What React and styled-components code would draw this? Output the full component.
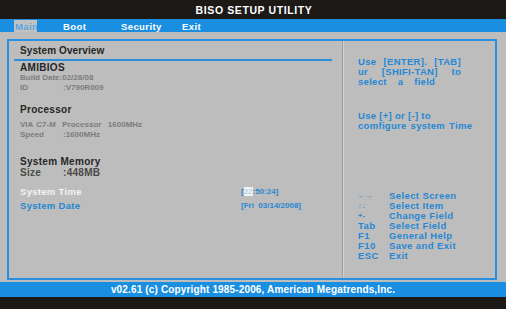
import React from "react";
import styled, { createGlobalStyle } from "styled-components";

const GlobalStyle = createGlobalStyle`
  html, body { margin: 0; padding: 0; background: #1c1917; }
  body { font-family: "Liberation Sans", Arial, sans-serif; }
`;

const Screen = styled.div`
  width: 506px;
  height: 309px;
  display: flex;
  flex-direction: column;
  font-weight: bold;
  overflow: hidden;
`;

const TitleBar = styled.div`
  height: 19px;
  background: #1c1917;
  color: #fff;
  font-size: 10.5px;
  letter-spacing: 0.6px;
  display: flex;
  align-items: center;
  justify-content: center;
  padding-left: 2px;
`;

const TabBar = styled.div`
  height: 13px;
  background: #1a8ee0;
  display: flex;
  align-items: stretch;
  padding-left: 14px;
`;

const Tab = styled.div`
  font-size: 9.5px;
  letter-spacing: 0.4px;
  line-height: 13px;
  color: ${(p) => (p.$active ? "#5aa6e0" : "#fff")};
  background: ${(p) => (p.$active ? "#c2c2c2" : "transparent")};
  padding-left: 1px;
  margin-top: 1px;
  margin-right: ${(p) => p.$gap || 0}px;
  width: ${(p) => p.$w}px;
  overflow: hidden;
  white-space: nowrap;
  box-sizing: border-box;
`;

const Main = styled.div`
  height: 250px;
  background: #bdbdbd;
  padding: 7px 9px 2px 7px;
  box-sizing: border-box;
  display: flex;
`;

const Panel = styled.div`
  flex: 1;
  border: 2px solid #2a8fdc;
  display: flex;
`;

const LeftCol = styled.div`
  width: 334px;
  border-right: 1px solid #9c9c9c;
  box-shadow: 1px 0 0 #d2d2d2;
  padding: 4px 0 0 11px;
  box-sizing: border-box;
`;

const RightCol = styled.div`
  flex: 1;
  padding: 16px 0 0 15px;
  color: #2688d4;
  font-size: 9.5px;
`;

const Heading = styled.div`
  font-size: 10px;
  letter-spacing: ${(p) => (p.$tight ? 0.1 : 0.3)}px;
  line-height: 12px;
  color: #262626;
  margin-top: ${(p) => p.$mt || 0}px;
`;

const Rule = styled.div`
  height: 2px;
  background: #2a8fdc;
  margin: 2px 10px 0 -6px;
`;

const Small = styled.div`
  font-size: 8px;
  line-height: 10px;
  color: #7c7c7c;
  display: flex;
  white-space: pre;
  word-spacing: ${(p) => p.$ws || 0}px;
  margin-top: ${(p) => p.$mt || 0}px;
`;

const Label = styled.span`
  width: ${(p) => p.$w || 43}px;
`;

const SizeRow = styled.div`
  font-size: 10px;
  line-height: 11px;
  margin-top: -1px;
  color: #4a4a4a;
  display: flex;
  letter-spacing: 0.3px;
`;

const Setting = styled.div`
  display: flex;
  align-items: center;
  height: 14px;
  margin-top: ${(p) => p.$mt || 0}px;
`;

const SettingName = styled.span`
  width: 221px;
  font-size: 9.5px;
  letter-spacing: 0.3px;
  color: ${(p) => (p.$selected ? "#f4f4f4" : "#2688d4")};
`;

const SettingValue = styled.span`
  font-size: 8px;
  color: #2688d4;
  white-space: pre;
`;

const Hl = styled.span`
  background: #f2f2f2;
  color: #b8d4ee;
`;

const HelpLine = styled.div`
  width: ${(p) => (p.$justify ? "103px" : "auto")};
  line-height: 10px;
  white-space: nowrap;
  text-align: justify;
  text-align-last: ${(p) => (p.$justify ? "justify" : "left")};
  word-spacing: ${(p) => p.$ws || 0}px;
  letter-spacing: 0.3px;
`;

const HelpBlock = styled.div`
  margin-top: ${(p) => p.$mt || 0}px;
`;

const Keys = styled.div`
  margin-top: ${(p) => p.$mt || 0}px;
  display: grid;
  grid-template-columns: 31px auto;
  line-height: 10px;
  letter-spacing: 0.4px;
`;

const KeyName = styled.span`
  font-size: ${(p) => (p.$small ? 7 : 9.5)}px;
`;

const Footer = styled.div`
  height: 15px;
  background: #1a8ee0;
  color: #fff;
  font-size: 10px;
  letter-spacing: 0.15px;
  display: flex;
  align-items: center;
  justify-content: center;
`;

const BottomBar = styled.div`
  flex: 1;
  background: #1c1917;
`;

const tabs = [
  { name: "Main", w: 23, gap: 25, active: true },
  { name: "Boot", w: 58 },
  { name: "Security", w: 61 },
  { name: "Exit", w: 40 },
];

const keys = [
  ["←→", "Select Screen", true],
  ["↑↓", "Select Item", true],
  ["+-", "Change Field", true],
  ["Tab", "Select Field"],
  ["F1", "General Help"],
  ["F10", "Save and Exit"],
  ["ESC", "Exit"],
];

export default function App() {
  return (
    <Screen>
      <GlobalStyle />
      <TitleBar>BISO SETUP UTILITY</TitleBar>
      <TabBar>
        {tabs.map((t) => (
          <Tab key={t.name} $active={t.active} $w={t.w} $gap={t.gap}>
            {t.name}
          </Tab>
        ))}
      </TabBar>
      <Main>
        <Panel>
          <LeftCol>
            <Heading $tight>System Overview</Heading>
            <Rule />
            <Heading $mt={1}>AMIBIOS</Heading>
            <Small $mt={-1}>Build Date:02/28/08</Small>
            <Small>
              <Label>ID</Label>:V790R009
            </Small>
            <Heading $mt={11}>Processor</Heading>
            <Small $mt={4} $ws={1}>VIA C7-M  Processor  1600MHz</Small>
            <Small>
              <Label>Speed</Label>:1600MHz
            </Small>
            <Heading $mt={16}>System Memory</Heading>
            <SizeRow>
              <Label>Size</Label>:448MB
            </SizeRow>
            <Setting $mt={6}>
              <SettingName $selected>System Time</SettingName>
              <SettingValue>
                [<Hl>22</Hl>:50:24]
              </SettingValue>
            </Setting>
            <Setting>
              <SettingName>System Date</SettingName>
              <SettingValue>[Fri  03/14/2008]</SettingValue>
            </Setting>
          </LeftCol>
          <RightCol>
            <HelpBlock>
              <HelpLine $justify>Use [ENTER]. [TAB]</HelpLine>
              <HelpLine $justify>ur [SHIFI-TAN] to</HelpLine>
              <HelpLine $ws={8}>select a field</HelpLine>
            </HelpBlock>
            <HelpBlock $mt={24}>
              <HelpLine>Use [+] or [-] to</HelpLine>
              <HelpLine $ws={1}>comfigure system Time</HelpLine>
            </HelpBlock>
            <Keys $mt={60}>
              {keys.map(([k, d, s]) => (
                <React.Fragment key={d}>
                  <KeyName $small={s}>{k}</KeyName>
                  <span>{d}</span>
                </React.Fragment>
              ))}
            </Keys>
          </RightCol>
        </Panel>
      </Main>
      <Footer>v02.61 (c) Copyright 1985-2006, American Megatrends,Inc.</Footer>
      <BottomBar />
    </Screen>
  );
}
